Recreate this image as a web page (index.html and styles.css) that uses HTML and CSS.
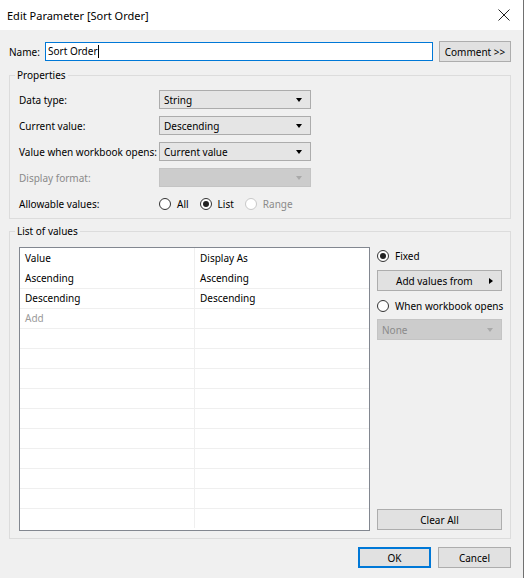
FILE: index.html
```html
<!DOCTYPE html>
<html lang="en">

<head>
    <meta charset="UTF-8">
    <title>Edit Parameter [Sort Order]</title>
    <link rel="stylesheet" href="styles.css">
</head>

<body>

    <div class="window">

        <header class="titlebar">
            <span class="title">Edit Parameter [Sort Order]</span>
            <svg class="close" width="12" height="12" viewBox="0 0 12 12">
                <path d="M0.5 0.5L11.5 11.5M11.5 0.5L0.5 11.5" />
            </svg>
        </header>

        <main class="content">

            <div class="name-row">
                <label class="name-label">Name:</label>
                <div class="text-input">Sort Order<span class="caret"></span></div>
                <button class="btn comment-btn">Comment &gt;&gt;</button>
            </div>

            <fieldset class="group properties">
                <legend>Properties</legend>

                <div class="prop-row">
                    <span class="prop-label">Data type:</span>
                    <div class="select"><span>String</span><i class="arrow"></i></div>
                </div>
                <div class="prop-row">
                    <span class="prop-label">Current value:</span>
                    <div class="select"><span>Descending</span><i class="arrow"></i></div>
                </div>
                <div class="prop-row">
                    <span class="prop-label">Value when workbook opens:</span>
                    <div class="select"><span>Current value</span><i class="arrow"></i></div>
                </div>
                <div class="prop-row">
                    <span class="prop-label disabled-text">Display format:</span>
                    <div class="select disabled"><span></span><i class="arrow"></i></div>
                </div>
                <div class="prop-row">
                    <span class="prop-label">Allowable values:</span>
                    <div class="radios">
                        <label class="radio"><span class="mark"></span>All</label>
                        <label class="radio"><span class="mark checked"></span>List</label>
                        <label class="radio disabled-text"><span class="mark off"></span>Range</label>
                    </div>
                </div>
            </fieldset>

            <fieldset class="group values">
                <legend>List of values</legend>

                <div class="values-body">
                    <div class="grid-wrap">
                        <table class="value-grid">
                            <tr><td>Value</td><td>Display As</td></tr>
                            <tr class="no-line"><td>Ascending</td><td>Ascending</td></tr>
                            <tr><td>Descending</td><td>Descending</td></tr>
                            <tr><td class="add-cell">Add</td><td></td></tr>
                            <tr><td></td><td></td></tr>
                            <tr><td></td><td></td></tr>
                            <tr><td></td><td></td></tr>
                            <tr><td></td><td></td></tr>
                            <tr><td></td><td></td></tr>
                            <tr><td></td><td></td></tr>
                            <tr><td></td><td></td></tr>
                            <tr><td></td><td></td></tr>
                            <tr><td></td><td></td></tr>
                            <tr><td></td><td></td></tr>
                        </table>
                    </div>

                    <div class="side">
                        <label class="radio side-radio"><span class="mark checked"></span>Fixed</label>
                        <button class="btn add-btn"><span>Add values from</span><i class="arrow-right"></i></button>
                        <label class="radio side-radio when"><span class="mark"></span>When workbook opens</label>
                        <div class="select disabled none-select"><span>None</span><i class="arrow"></i></div>
                        <button class="btn clear-btn">Clear All</button>
                    </div>
                </div>
            </fieldset>

            <div class="footer">
                <button class="btn ok-btn">OK</button>
                <button class="btn">Cancel</button>
            </div>

        </main>

    </div>

</body>

</html>
```

FILE: styles.css
```css
/*      Variables       */
:root {
    --face: #f0f0f0;
    --btn-face: #e1e1e1;
    --btn-border: #adadad;
    --select-face: #e5e5e5;
    --select-border: #acacac;
    --group-line: #dcdcdc;
    --grid-line: #efefef;
    --accent: #0078d7;
    --muted: #8a8a8a;
}

/*      Reset Styles    */
html {
    padding: 0;
    margin: 0;
    box-sizing: border-box;
    font-family: "Noto Sans", "Open Sans", sans-serif;
    font-size: 10px;
    color: #000;
}

body {
    padding: 0;
    margin: 0;
    overflow: hidden;
    white-space: nowrap;
}

*,
*::before,
*::after {
    box-sizing: inherit;
}

.window {
    width: 524px;
    height: 578px;
    background-color: var(--face);
    border-right: 1px solid #707070;
    display: flex;
    flex-direction: column;
}

/*      Title bar       */
.titlebar {
    height: 30px;
    flex: none;
    background-color: #fff;
    padding: 0 13px 0 7px;

    display: flex;
    justify-content: space-between;
    align-items: center;
}

.title {
    font-size: 11px;
}

.close {
    stroke: #222;
    stroke-width: 1;
    fill: none;
}

/*      Body            */
.content {
    flex: 1;
    padding: 11px 12px 0 9px;
}

.btn {
    font: inherit;
    color: #000;
    background-color: var(--btn-face);
    border: 1px solid var(--btn-border);
    border-radius: 0;
    height: 21px;
    padding: 0;
    margin: 0;
}

.name-row {
    height: 21px;
    display: flex;
    align-items: center;
}

.name-label {
    width: 36px;
    flex: none;
}

.text-input {
    flex: 1;
    height: 19px;
    background-color: #fff;
    border: 1px solid var(--accent);
    padding: 0 2px;
    line-height: 17px;
    display: flex;
    align-items: center;
}

.caret {
    display: inline-block;
    width: 1px;
    height: 13px;
    background-color: #000;
}

.comment-btn {
    width: 72px;
    margin-left: 6px;
    flex: none;
}

/*      Group boxes     */
.group {
    margin: 0;
    border: 1px solid var(--group-line);
    border-radius: 0;
    min-width: 0;
}

.group legend {
    padding: 0 2px;
    margin-left: -4px;
    line-height: 14px;
}

.properties {
    margin-top: 6px;
    padding: 8px 9px 5px 9px;

    display: flex;
    flex-direction: column;
    gap: 7px;
}

.prop-row {
    height: 19px;
    display: flex;
    align-items: center;
}

.prop-label {
    width: 140px;
    flex: none;
}

.disabled-text {
    color: var(--muted);
}

.select {
    width: 152px;
    height: 19px;
    background-color: var(--select-face);
    border: 1px solid var(--select-border);
    padding: 0 8px 0 4px;

    display: flex;
    justify-content: space-between;
    align-items: center;
}

.select.disabled {
    background-color: #cccccc;
    border-color: #c4c4c4;
    color: var(--muted);
}

.arrow {
    width: 0;
    height: 0;
    border-left: 3.5px solid transparent;
    border-right: 3.5px solid transparent;
    border-top: 4px solid #000;
}

.disabled .arrow {
    border-top-color: #a9a9a9;
}

.radios {
    display: flex;
    gap: 11px;
}

.radio {
    display: flex;
    align-items: center;
    gap: 6px;
}

.mark {
    width: 12px;
    height: 12px;
    border: 1px solid #333;
    border-radius: 50%;
    background-color: #fff;
    flex: none;

    display: grid;
    place-content: center;
}

.mark.checked::after {
    content: "";
    width: 6px;
    height: 6px;
    border-radius: 50%;
    background-color: #222;
}

.mark.off {
    border-color: #c8c8c8;
}

/*      List of values  */
.values {
    margin-top: 5px;
    padding: 9px 8px 7px 9px;
}

.values-body {
    height: 284px;
    display: flex;
}

.grid-wrap {
    width: 352px;
    height: 100%;
    background-color: #fff;
    border: 1px solid #828790;
    overflow: hidden;
}

.value-grid {
    width: 100%;
    border-collapse: collapse;
    table-layout: fixed;
}

.value-grid td {
    height: 20px;
    padding: 0 5px;
    border-top: 1px solid var(--grid-line);
}

.value-grid tr:first-child td,
.value-grid tr.no-line td {
    border-top: none;
}

.value-grid td+td {
    border-left: 1px solid var(--grid-line);
}

.add-cell {
    color: #9a9a9a;
}

.side {
    width: 125px;
    margin-left: 7px;
    padding-bottom: 1px;

    display: flex;
    flex-direction: column;
}

.side-radio {
    height: 16px;
    margin-top: 1px;
}

.add-btn {
    margin-top: 6px;
    padding: 0 8px 0 18px;

    display: flex;
    justify-content: space-between;
    align-items: center;
}

.arrow-right {
    width: 0;
    height: 0;
    border-top: 3.5px solid transparent;
    border-bottom: 3.5px solid transparent;
    border-left: 4px solid #000;
}

.side-radio.when {
    margin-top: 7px;
}

.none-select {
    width: 100%;
    height: 21px;
    margin-top: 5px;
}

.clear-btn {
    margin-top: auto;
}

/*      Footer          */
.footer {
    margin-top: 8px;
    display: flex;
    justify-content: flex-end;
    gap: 7px;
}

.footer .btn {
    width: 73px;
}

.ok-btn {
    border-color: var(--accent);
    box-shadow: inset 0 0 0 1px var(--accent);
}
```
